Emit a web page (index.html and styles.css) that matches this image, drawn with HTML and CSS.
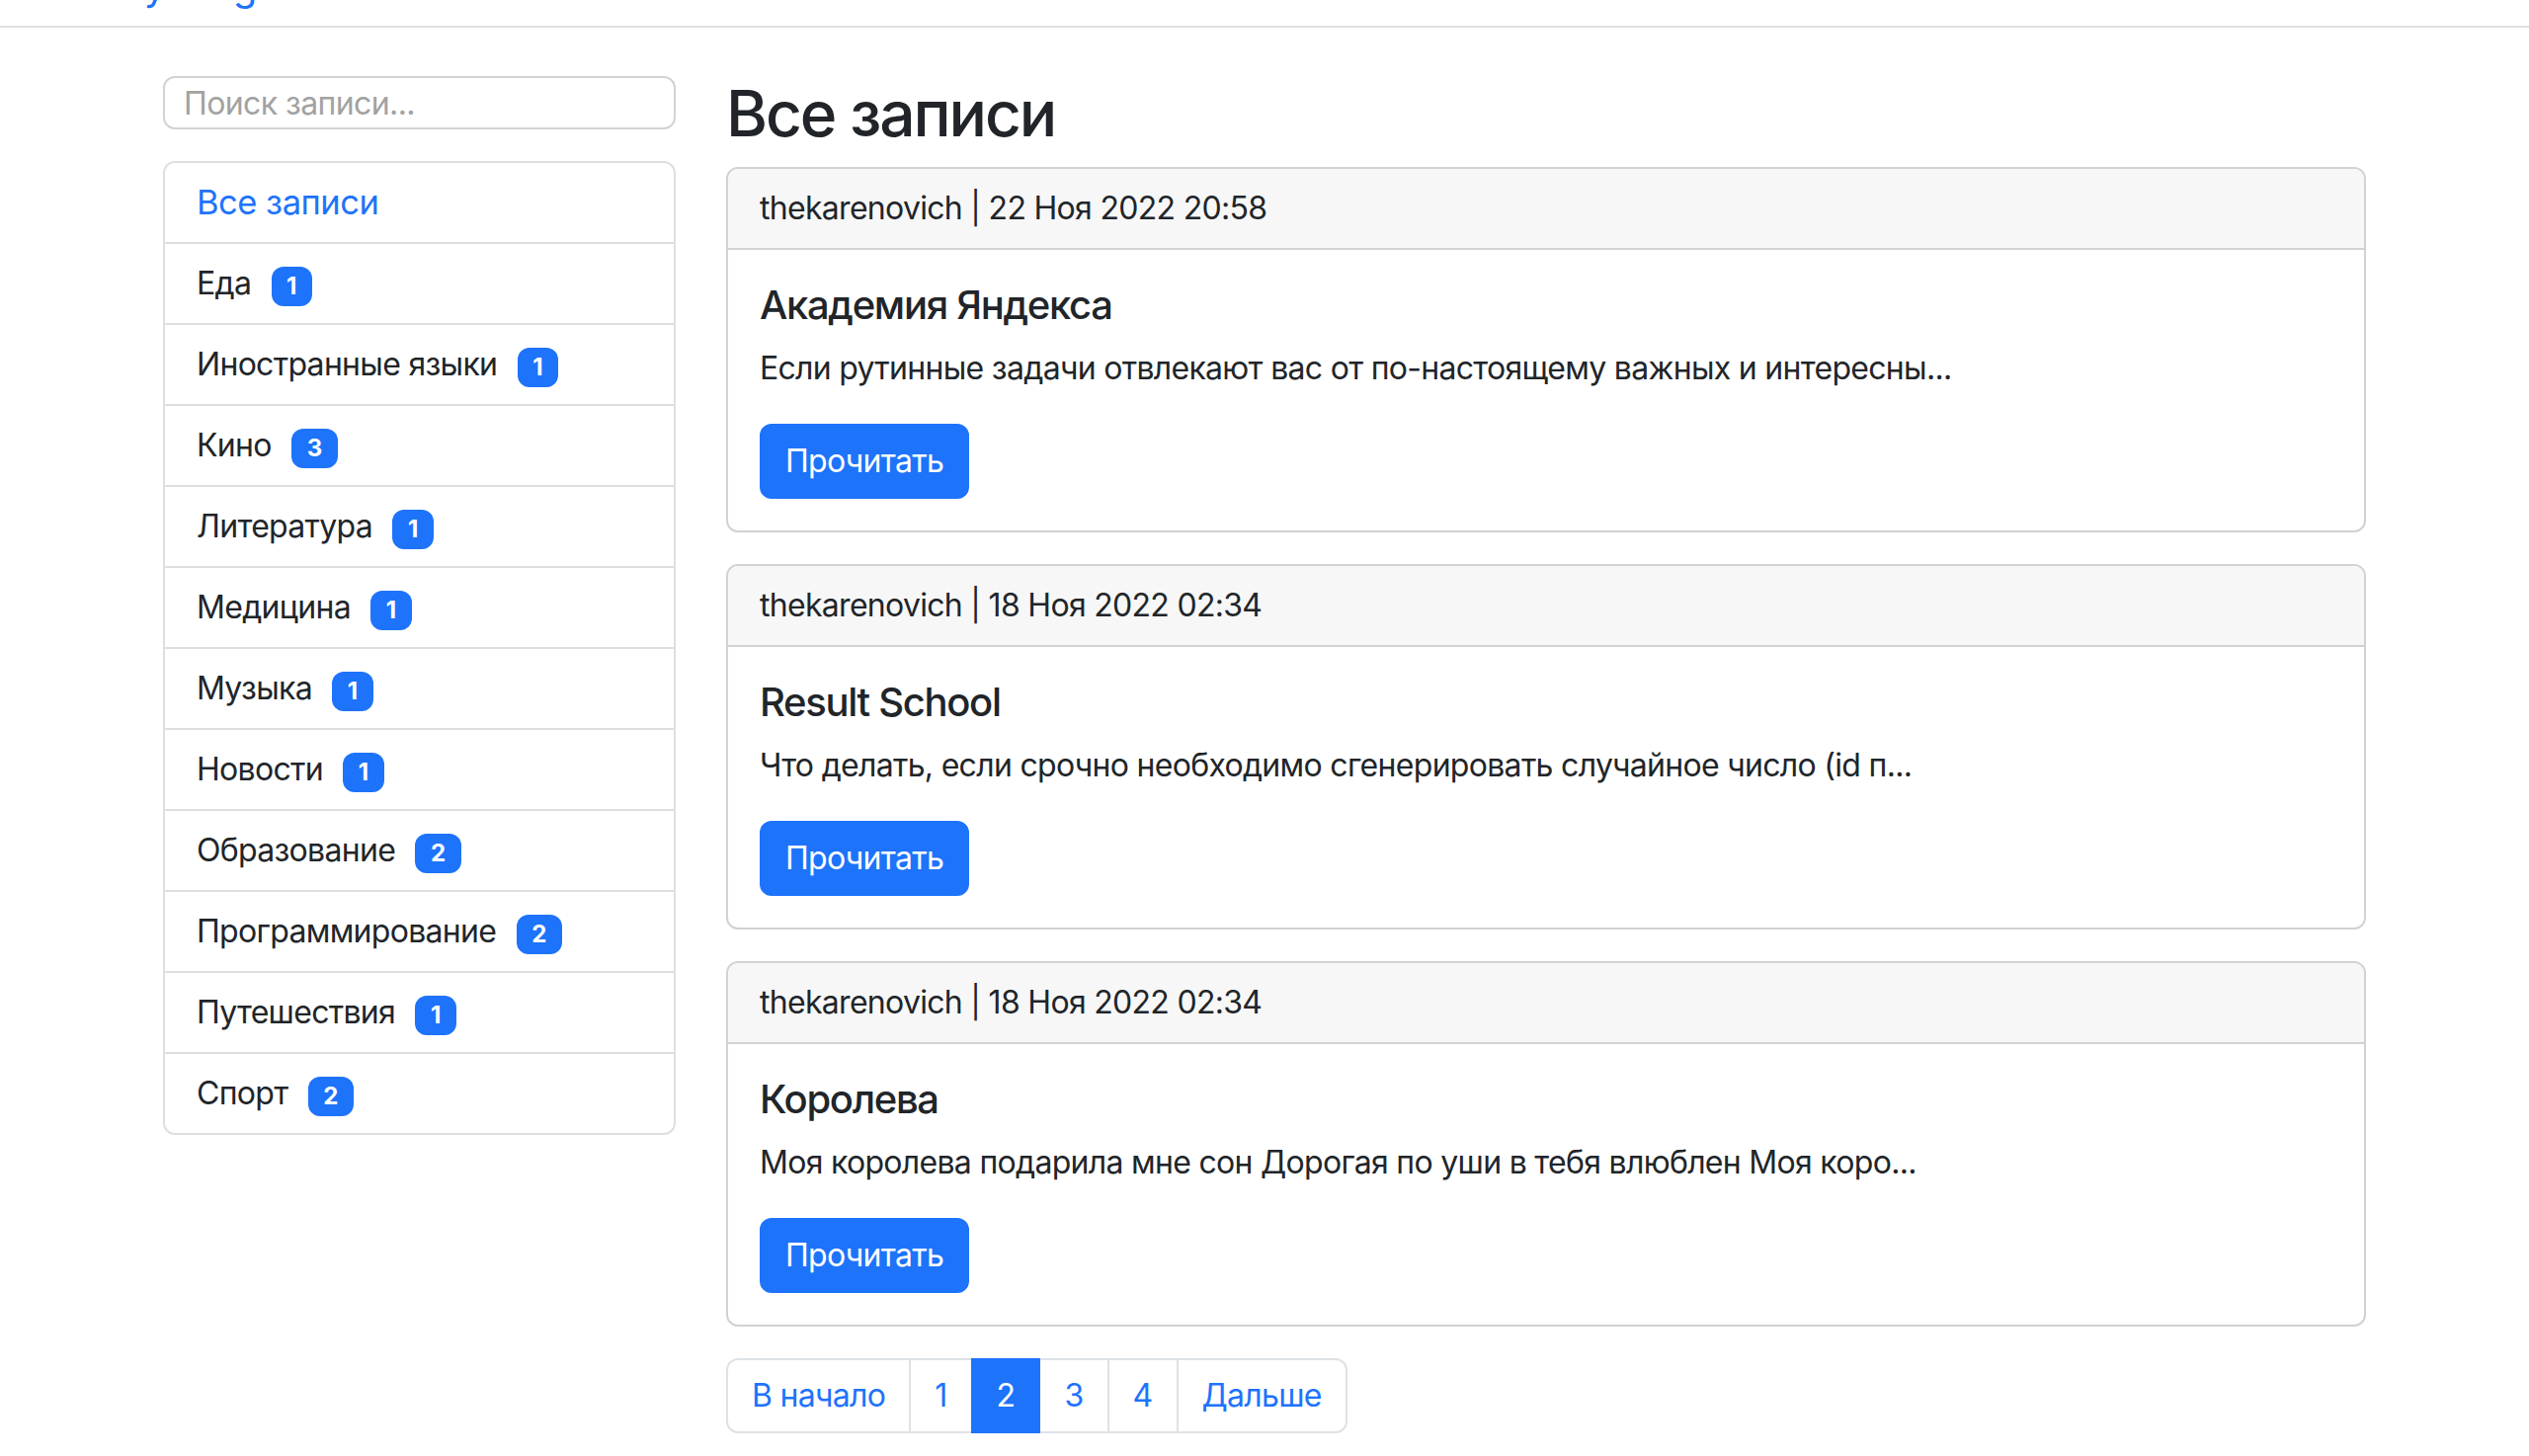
FILE: index.html
```html
<!DOCTYPE html>
<html lang="ru">
<head>
<meta charset="utf-8">
<title>Все записи</title>
<link rel="stylesheet" href="styles.css">
</head>
<body>
<header class="navbar">
  <a class="brand" href="#">My Blog</a>
</header>
<div class="container">
  <aside class="sidebar">
    <input class="search" type="text" placeholder="Поиск записи...">
    <ul class="list-group">
      <li class="list-item active">Все записи</li>
      <li class="list-item">Еда <span class="badge">1</span></li>
      <li class="list-item">Иностранные языки <span class="badge">1</span></li>
      <li class="list-item">Кино <span class="badge">3</span></li>
      <li class="list-item">Литература <span class="badge">1</span></li>
      <li class="list-item">Медицина <span class="badge">1</span></li>
      <li class="list-item">Музыка <span class="badge">1</span></li>
      <li class="list-item">Новости <span class="badge">1</span></li>
      <li class="list-item">Образование <span class="badge">2</span></li>
      <li class="list-item">Программирование <span class="badge">2</span></li>
      <li class="list-item">Путешествия <span class="badge">1</span></li>
      <li class="list-item">Спорт <span class="badge">2</span></li>
    </ul>
  </aside>
  <main class="content">
    <h2 class="page-title">Все записи</h2>
    <article class="card">
      <div class="card-header">thekarenovich | 22 Ноя 2022 20:58</div>
      <div class="card-body">
        <h5 class="card-title">Академия Яндекса</h5>
        <p class="card-text">Если рутинные задачи отвлекают вас от по-настоящему важных и интересны...</p>
        <a class="btn" href="#">Прочитать</a>
      </div>
    </article>
    <article class="card">
      <div class="card-header">thekarenovich | 18 Ноя 2022 02:34</div>
      <div class="card-body">
        <h5 class="card-title">Result School</h5>
        <p class="card-text">Что делать, если срочно необходимо сгенерировать случайное число (id п...</p>
        <a class="btn" href="#">Прочитать</a>
      </div>
    </article>
    <article class="card">
      <div class="card-header">thekarenovich | 18 Ноя 2022 02:34</div>
      <div class="card-body">
        <h5 class="card-title">Королева</h5>
        <p class="card-text">Моя королева подарила мне сон Дорогая по уши в тебя влюблен Моя коро...</p>
        <a class="btn" href="#">Прочитать</a>
      </div>
    </article>
    <nav class="pagination">
      <a class="page-link first" href="#">В начало</a>
      <a class="page-link" href="#">1</a>
      <span class="page-link current">2</span>
      <a class="page-link" href="#">3</a>
      <a class="page-link" href="#">4</a>
      <a class="page-link last" href="#">Дальше</a>
    </nav>
  </main>
</div>
</body>
</html>
```
FILE: styles.css
```css
* { box-sizing: border-box; }

body {
  margin: 0;
  font-family: Inter, "Noto Sans", "DejaVu Sans", sans-serif;
  font-size: 32px;
  line-height: 48px;
  letter-spacing: -0.7px;
  color: #212529;
  background: #fff;
}

a { text-decoration: none; }

.navbar {
  height: 28px;
  border-bottom: 2px solid #dfe1e4;
  overflow: hidden;
  padding-left: 110px;
}

.brand {
  display: block;
  font-size: 40px;
  line-height: 48px;
  margin-top: -38px;
  color: #1e73fb;
}

.container {
  width: 2230px;
  margin: 0 auto;
  padding-top: 49px;
  display: grid;
  grid-template-columns: 519px 1fr;
  column-gap: 51px;
  align-items: start;
}

.search {
  display: block;
  width: 100%;
  height: 54px;
  margin: 0 0 32px;
  padding: 0 19px;
  font-family: inherit;
  font-size: 32px;
  letter-spacing: -0.6px;
  color: #212529;
  border: 2px solid #d3d3d3;
  border-radius: 12px;
  outline: none;
}

.search::placeholder { color: #a2a2a2; }

.list-group {
  list-style: none;
  margin: 0;
  padding: 0;
  border: 2px solid #dfdfdf;
  border-radius: 12px;
}

.list-item {
  padding: 16px 32px;
  border-top: 2px solid #dfdfdf;
}

.list-item:first-child { border-top: 0; }

.list-item.active {
  color: #1e73fb;
  font-size: 34.5px;
  letter-spacing: -0.5px;
}

.badge {
  display: inline-block;
  margin-left: 12px;
  padding: 8.4px 15.6px;
  font-size: 24px;
  font-weight: 700;
  line-height: 1;
  letter-spacing: 0;
  color: #fff;
  background: #1e73fb;
  border-radius: 12px;
  vertical-align: baseline;
}

.page-title {
  margin: 0 0 15px;
  font-size: 64px;
  font-weight: 500;
  line-height: 76.8px;
  letter-spacing: -0.033em;
}

.card {
  border: 2px solid #d2d2d2;
  border-radius: 12px;
  margin-bottom: 32px;
  overflow: hidden;
}

.card-header {
  padding: 16px 32px;
  background: #f7f7f7;
  border-bottom: 2px solid #d2d2d2;
}

.card-body { padding: 32px; }

.card-title {
  margin: 0 0 16px;
  font-size: 40px;
  font-weight: 500;
  line-height: 48px;
  letter-spacing: -0.033em;
}

.card-text { margin: 0 0 32px; }

.btn {
  display: inline-block;
  padding: 12px 24px;
  border: 2px solid #1e73fb;
  border-radius: 12px;
  background: #1e73fb;
  color: #fff;
}

.pagination {
  display: flex;
  margin-top: 31px;
}

.page-link {
  display: block;
  padding: 12px 24px;
  color: #1e73fb;
  border: 2px solid #dee2e6;
  margin-left: -2px;
  background: #fff;
}

.page-link.first { margin-left: 0; border-radius: 12px 0 0 12px; }
.page-link.last { border-radius: 0 12px 12px 0; }

.page-link.current {
  position: relative;
  z-index: 1;
  background: #1e73fb;
  border-color: #1e73fb;
  color: #fff;
}
```
